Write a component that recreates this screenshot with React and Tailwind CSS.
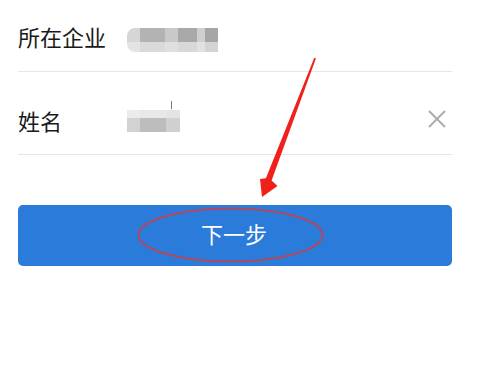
export default function App() {
  const font = { fontFamily: '"Noto Sans CJK SC", "Noto Sans", sans-serif' };
  return (
    <div className="relative w-[490px] h-[377px] bg-white overflow-hidden" style={font}>
      <div className="pl-[18px] pr-[38px]">
        <div className="flex items-start pt-[24px] pb-[19px] border-b border-[#e6e6e6]">
          <span className="w-[109px] text-[22px] leading-[24px] text-[#1a1a1a]">所在企业</span>
          <div className="flex flex-col mt-[4px]">
            <div className="flex h-[14px]">
              <div className="w-[13px] bg-[#d6d6d6] rounded-tl-[8px]" />
              <div className="w-[25px] bg-[#b3b3b3]" />
              <div className="w-[13px] bg-[#c9c9c9]" />
              <div className="w-[19px] bg-[#a9a9a9]" />
              <div className="w-[8px] bg-[#cfcfcf]" />
              <div className="w-[13px] bg-[#a6a6a6]" />
            </div>
            <div className="flex h-[10px]">
              <div className="w-[13px] bg-[#e4e4e4] rounded-bl-[8px]" />
              <div className="w-[25px] bg-[#dadada]" />
              <div className="w-[13px] bg-[#e0e0e0]" />
              <div className="w-[19px] bg-[#d8d8d8]" />
              <div className="w-[8px] bg-[#e2e2e2]" />
              <div className="w-[13px] bg-[#d4d4d4]" />
            </div>
          </div>
        </div>
        <div className="flex items-start pt-[36px] pb-[22px] border-b border-[#e6e6e6]">
          <span className="w-[109px] text-[22px] leading-[24px] text-[#1a1a1a]">姓名</span>
          <div className="relative flex flex-col mt-[2px]">
            <div className="absolute left-[44px] -top-[9px] w-[1px] h-[8px] bg-[#777]" />
            <div className="flex h-[8px]">
              <div className="w-[13px] bg-[#ececec]" />
              <div className="w-[26px] bg-[#e8e8e8]" />
              <div className="w-[14px] bg-[#e4e4e4]" />
            </div>
            <div className="flex h-[14px]">
              <div className="w-[13px] bg-[#d2d2d2]" />
              <div className="w-[26px] bg-[#bdbdbd]" />
              <div className="w-[14px] bg-[#d0d0d0]" />
            </div>
          </div>
          <div className="ml-auto mr-[6px] mt-[2px]">
            <svg width="18" height="18" viewBox="0 0 18 18" className="block">
              <path d="M1 1 L17 17 M17 1 L1 17" stroke="#ababab" strokeWidth="1.8" fill="none" />
            </svg>
          </div>
        </div>
        <button className="mt-[50px] w-full h-[61px] rounded-[5px] bg-[#2b7bdb] text-white text-[22px] flex items-center justify-center">
          <span className="-mt-[4px] pr-[2px]">下一步</span>
        </button>
      </div>
      <svg className="absolute left-0 top-0 pointer-events-none" width="490" height="377" viewBox="0 0 490 377">
        <ellipse cx="230.5" cy="235" rx="92" ry="26.5" fill="none" stroke="#b0485e" strokeWidth="2" />
        <polygon points="314.3,57.7 315.9,58.4 271.6,180.5 277.5,186 262,197 260,179 265.9,178.3" fill="#f0201a" />
      </svg>
    </div>
  );
}
